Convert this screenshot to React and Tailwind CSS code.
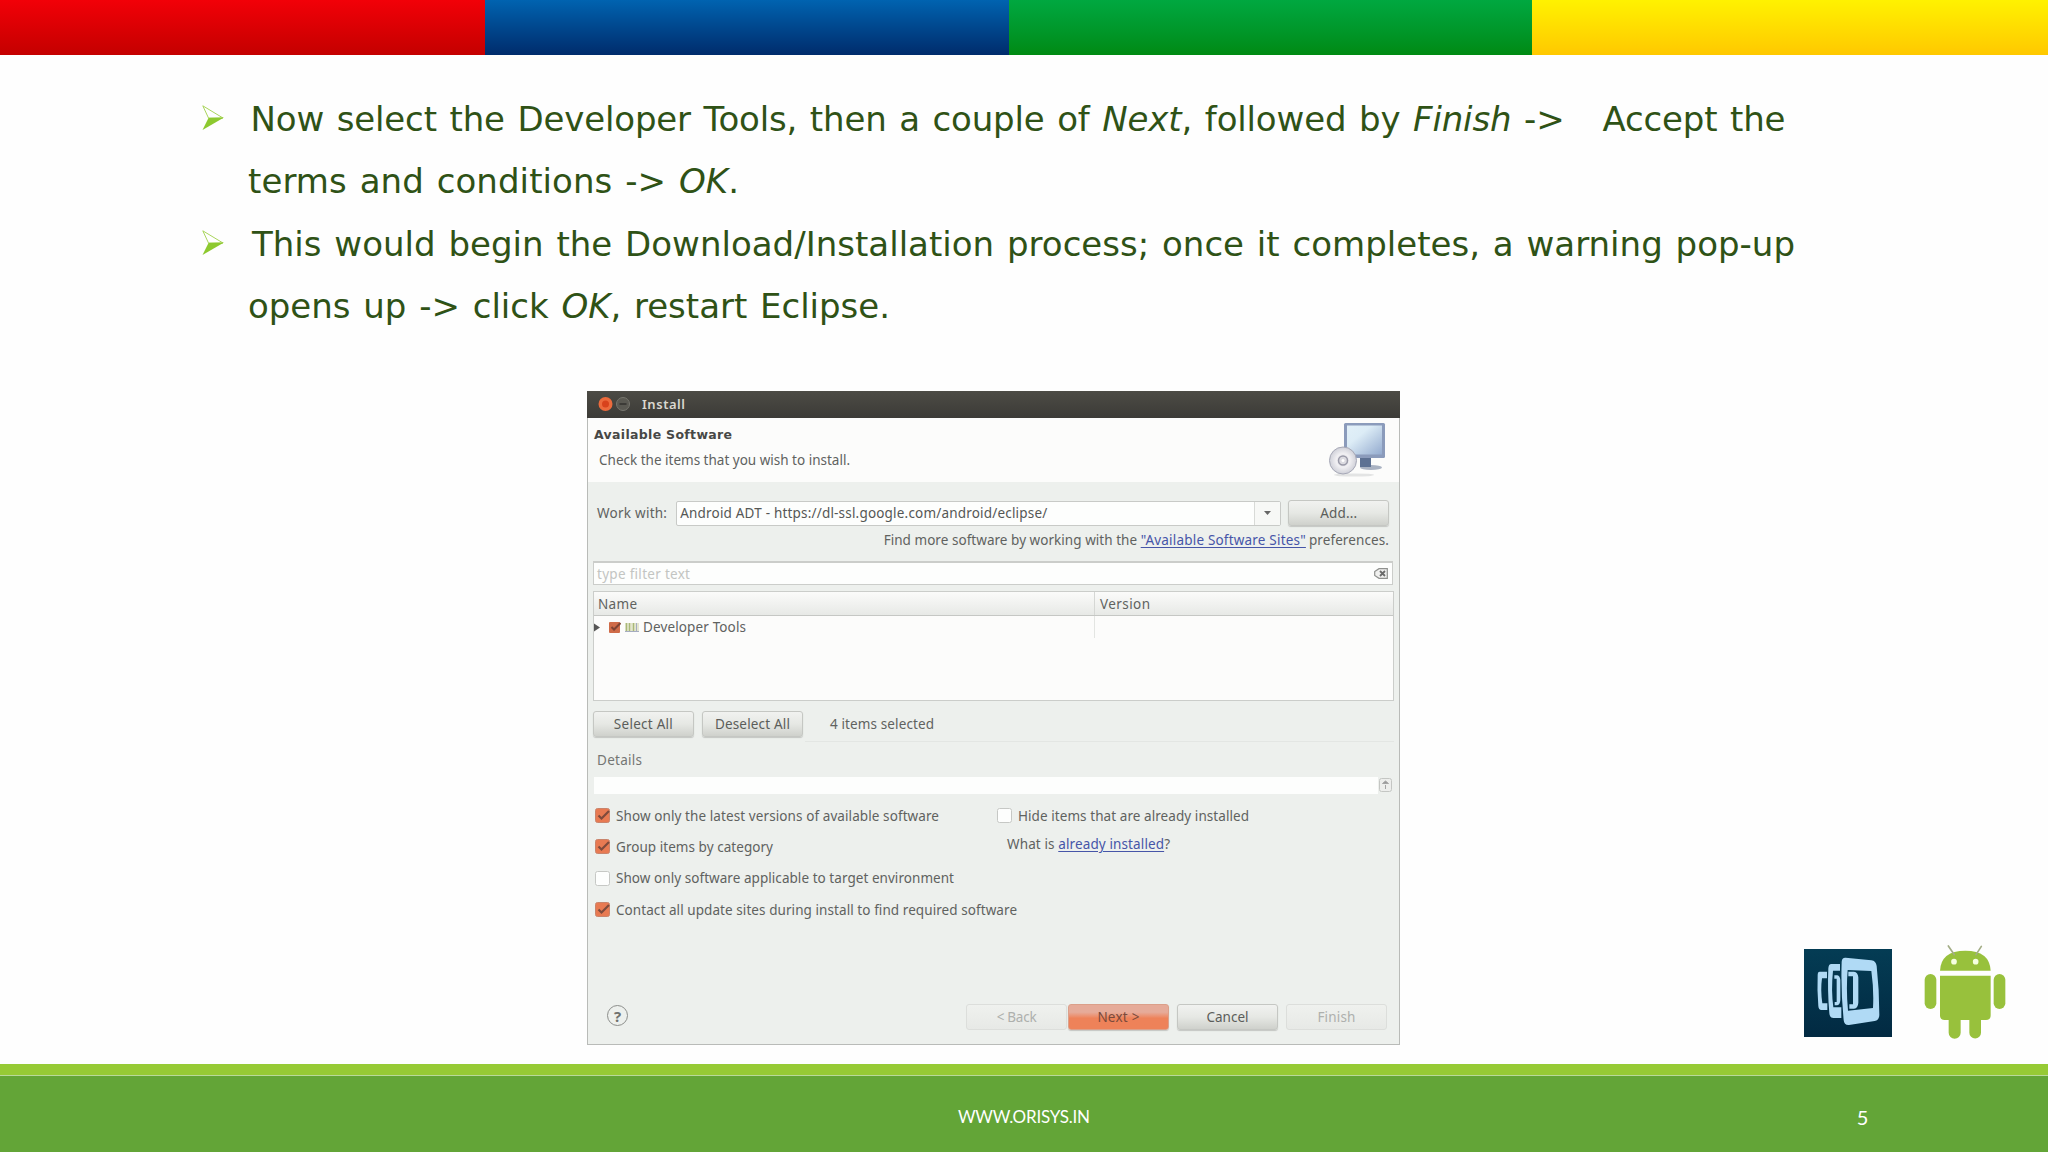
import { useLayoutEffect, useRef, useState } from 'react';

// Single line of text whose tracking is adjusted so that it fills `width`
function FitText({ width, className = '', children }) {
  const ref = useRef(null);
  const [spacing, setSpacing] = useState(0);

  useLayoutEffect(() => {
    const el = ref.current;
    const count = el.textContent.length;
    const natural = el.getBoundingClientRect().width - spacing * count;
    setSpacing((width - natural) / (count - 1));
  }, [width]);

  return (
    <span
      ref={ref}
      className={`inline-block shrink-0 whitespace-pre ${className}`}
      style={{ letterSpacing: `${spacing}px` }}
    >
      {children}
    </span>
  );
}

function Bullet() {
  return (
    <svg className="mt-[17px] h-[26px] w-[24px] shrink-0" viewBox="0 0 24 26">
      <path d="M0.8 0.8 L21 13 L6.500 13 Z" fill="#fff" stroke="#a9d45c" strokeWidth="1" />
      <path d="M6.500 13 L22 12.500 L0.500 25 Z" fill="#8dc92f" />
    </svg>
  );
}

function Checkbox({ checked }) {
  return (
    <svg className="h-[15px] w-[15px] shrink-0" viewBox="0 0 15 15">
      <rect
        x="0.5" y="0.5" width="14" height="14" rx="2"
        fill={checked ? '#e87a52' : '#fdfefd'}
        stroke={checked ? '#c9846c' : '#c6c8c5'}
      />
      {checked && <path d="M3.5 7.5 L6.5 10.5 L14 3" fill="none" stroke="#7e4a3c" strokeWidth="2.2" />}
    </svg>
  );
}

function Option({ checked, label, width }) {
  return (
    <div className="flex h-[31.3px] items-center gap-[6px]">
      <Checkbox checked={checked} />
      <FitText width={width}>{label}</FitText>
    </div>
  );
}

const buttonKinds = {
  normal: 'border-[#c5c7c3] bg-linear-to-b from-[#f1f2f0] via-[#e6e8e4] to-[#cfd1cc] text-[#5b5d5a] shadow-[0_1px_1px_#c4c6c3]',
  disabled: 'border-[#dcdedb] bg-linear-to-b from-[#eff1ee] to-[#e7e9e6] text-[#aeb0ad]',
  primary: 'border-[#dba08a] bg-linear-to-b from-[#e6ab99] from-30% to-[#ee8259] to-55% text-[#7a4a3b] shadow-[0_1px_1px_#c4c6c3]',
};

function Button({ kind = 'normal', width, children }) {
  return (
    <div className={`flex h-[26px] w-[101px] shrink-0 items-center justify-center rounded-[3px] border ${buttonKinds[kind]}`}>
      <FitText width={width}>{children}</FitText>
    </div>
  );
}

function ComputerIcon() {
  return (
    <svg className="h-[56px] w-[60px]" viewBox="0 0 60 56">
      <defs>
        <linearGradient id="screen" x1="0" y1="0" x2="1" y2="1">
          <stop offset="0" stopColor="#e2f0f8" />
          <stop offset="0.35" stopColor="#dcecf6" />
          <stop offset="1" stopColor="#94abcf" />
        </linearGradient>
        <radialGradient id="disc">
          <stop offset="0" stopColor="#c9c8d2" />
          <stop offset="0.5" stopColor="#f1f0f3" />
          <stop offset="1" stopColor="#cfd0d8" />
        </radialGradient>
      </defs>
      <ellipse cx="26" cy="53" rx="20" ry="1.6" fill="#e3e4e4" />
      <ellipse cx="43" cy="45.500" rx="11" ry="2.6" fill="#a9b2c2" />
      <rect x="32" y="36" width="11" height="9" fill="#5d7193" />
      <rect x="16" y="1" width="41" height="35" rx="1.5" fill="#8b9bbb" />
      <rect x="19" y="3.500" width="35" height="29" fill="url(#screen)" />
      <circle cx="15" cy="38.500" r="13.500" fill="url(#disc)" stroke="#a6a8b6" />
      <circle cx="15" cy="38.500" r="4.500" fill="#dcdbe1" stroke="#9a9aa8" strokeWidth="1.5" />
      <circle cx="15" cy="38.500" r="1.500" fill="#fff" />
    </svg>
  );
}

function InstallDialog() {
  return (
    <div className="flex h-[654px] w-[813px] flex-col border border-[#b9bbb8] bg-[#edf0ed] font-['Noto_Sans','Open_Sans',sans-serif] text-[13.5px] leading-[18px] text-[#60625f]">
      <div className="-mx-px -mt-px flex h-[27px] shrink-0 items-center bg-linear-to-b from-[#4c4b45] to-[#3c3b37] pb-px pl-[11px]">
        <svg className="h-[16px] w-[34px]" viewBox="0 0 34 16">
          <circle cx="7.500" cy="8" r="7" fill="#ec6a3c" />
          <circle cx="7.500" cy="8" r="3.500" fill="#d8421c" />
          <circle cx="25" cy="8" r="6.500" fill="#5a5952" stroke="#77766e" />
          <path d="M21.500 8 H28.500" stroke="#3c3b37" strokeWidth="2" />
        </svg>
        <FitText width={43} className="ml-[10px] text-[13px] font-semibold text-[#dad8d0]">Install</FitText>
      </div>

      <div className="flex h-[64px] shrink-0 justify-between bg-[#fcfcfb]">
        <div className="flex flex-col">
          <FitText width={138} className="mt-[8px] ml-[6px] self-start font-['DejaVu_Sans',sans-serif] text-[12.5px] font-bold text-[#474846]">
            Available Software
          </FitText>
          <FitText width={251} className="mt-[7px] ml-[11px] self-start">Check the items that you wish to install.</FitText>
        </div>
        <div className="mt-[4px] mr-[11px]">
          <ComputerIcon />
        </div>
      </div>

      <div className="mt-[18px] flex h-[26px] shrink-0 items-center pl-[9px]">
        <FitText width={70}>Work with:</FitText>
        <div className="ml-[9px] flex h-[25px] w-[605px] items-stretch rounded-[2px] border border-[#c8cac7] bg-[#fdfefd]">
          <div className="flex flex-1 items-center pl-[3px] text-[#555755]">
            <FitText width={367}>Android ADT - https://dl-ssl.google.com/android/eclipse/</FitText>
          </div>
          <div className="flex w-[26px] items-center justify-center border-l border-[#d8dad7] bg-[#f7f8f6]">
            <svg className="h-[4px] w-[7px]" viewBox="0 0 7 4"><path d="M0 0H7L3.500 4Z" fill="#666" /></svg>
          </div>
        </div>
        <div className="ml-[7px]">
          <Button width={37}>Add...</Button>
        </div>
      </div>

      <div className="mt-[5px] flex h-[18px] shrink-0 justify-end pr-[10px]">
        <FitText width={257}>Find more software by working with the </FitText>
        <FitText width={165} className="text-[#4655a8] underline underline-offset-2">"Available Software Sites"</FitText>
        <FitText width={80} className="ml-[3px]">preferences.</FitText>
      </div>

      <div className="mt-[12px] ml-[5px] flex h-[24px] w-[800px] shrink-0 items-center justify-between border border-t-2 border-[#cbcdca] bg-[#fdfefd] pr-[4px] pl-[3px]">
        <FitText width={93} className="text-[#c3c5c2]">type filter text</FitText>
        <svg className="h-[11px] w-[14px]" viewBox="0 0 14 11">
          <path d="M5 0.700 H13.300 V10.300 H5 L0.700 7.500 V3.500 Z" fill="#f0f1ef" stroke="#8f918e" strokeWidth="1.200" />
          <path d="M6 3 L11 8 M11 3 L6 8" stroke="#6b6b6b" strokeWidth="1.800" />
        </svg>
      </div>

      <div className="mt-[6px] ml-[5px] flex h-[110px] w-[801px] shrink-0 flex-col border border-[#cbcdca] bg-[#fcfcfb]">
        <div className="flex h-[24px] shrink-0 items-center border-b border-[#c5c7c4] bg-linear-to-b from-[#fbfbfa] to-[#e7e9e6]">
          <div className="flex h-full w-[501px] items-center border-r border-[#d5d7d4] pl-[4px]">
            <FitText width={39}>Name</FitText>
          </div>
          <FitText width={50} className="ml-[5px]">Version</FitText>
        </div>
        <div className="flex h-[22px] w-[501px] items-center border-r border-[#e3e5e2]">
          <svg className="h-[9px] w-[6px]" viewBox="0 0 6 9"><path d="M0 0.500 L6 4.500 L0 8.500Z" fill="#555" /></svg>
          <svg className="ml-[9px] h-[11px] w-[12px]" viewBox="0 0 12 11">
            <rect width="11" height="11" rx="1" fill="#cf6b48" />
            <path d="M2.500 5 L5 7.500 L11.500 1" fill="none" stroke="#7e4333" strokeWidth="2" />
          </svg>
          <svg className="ml-[4px] h-[9px] w-[14px]" viewBox="0 0 14 9">
            <rect width="14" height="9" fill="#e4e6ce" />
            <path d="M1.500 0V8 M4.500 0V8 M8.500 0V8" stroke="#a9b878" strokeWidth="1.400" />
            <path d="M11.500 0V8 M0 8.500H14" stroke="#a5acc0" />
          </svg>
          <FitText width={103} className="ml-[4px]">Developer Tools</FitText>
        </div>
      </div>

      <div className="mt-[10px] flex h-[26px] shrink-0 items-center pl-[5px]">
        <Button width={59}>Select All</Button>
        <div className="ml-[8px]">
          <Button width={75}>Deselect All</Button>
        </div>
        <FitText width={104} className="ml-[27px]">4 items selected</FitText>
      </div>

      <div className="mt-[4px] mr-[5px] ml-[217px] h-px shrink-0 bg-[#e3e6e3]" />
      <FitText width={45} className="mt-[9px] ml-[9px] self-start text-[#747673]">Details</FitText>

      <div className="mt-[7px] ml-[6px] flex h-[18px] shrink-0 items-center">
        <div className="h-[17px] w-[784px] bg-[#fdfefd]" />
        <svg className="ml-px h-[14px] w-[13px]" viewBox="0 0 13 14">
          <rect x="0.500" y="0.500" width="12" height="13" rx="2" fill="#edeeec" stroke="#c4c6c3" />
          <path d="M3.500 5.500 L6.500 3 L9.500 5.500Z M6.500 7V11" fill="#999" stroke="#a5a5a5" />
        </svg>
      </div>

      <div className="mt-[6px] flex shrink-0 pl-[7px]">
        <div className="w-[402px]">
          <Option checked width={323} label="Show only the latest versions of available software" />
          <Option checked width={157} label="Group items by category" />
          <Option width={338} label="Show only software applicable to target environment" />
          <Option checked width={401} label="Contact all update sites during install to find required software" />
        </div>
        <div>
          <Option width={231} label="Hide items that are already installed" />
          <FitText width={163} className="mt-[4px] ml-[10px]">
            What is <span className="text-[#4655a8] underline underline-offset-2">already installed</span>?
          </FitText>
        </div>
      </div>

      <div className="mt-auto mb-[14px] flex h-[26px] shrink-0 items-center pr-[12px] pl-[19px]">
        <div className="mb-[3px] flex h-[21px] w-[21px] items-center justify-center rounded-full border-[1.5px] border-[#8c8e8b] text-[15px] font-bold text-[#70726f]">?</div>
        <div className="ml-auto flex">
          <Button kind="disabled" width={40}>&lt; Back</Button>
          <div className="ml-px flex gap-[8px]">
            <Button kind="primary" width={42}>Next &gt;</Button>
            <Button width={42}>Cancel</Button>
            <Button kind="disabled" width={38}>Finish</Button>
          </div>
        </div>
      </div>
    </div>
  );
}

function PhoneGapLogo() {
  return (
    <svg className="h-[88px] w-[88px]" viewBox="70 87 264 264">
      <defs>
        <linearGradient id="pg" x1="0" y1="0" x2="0" y2="1">
          <stop offset="0" stopColor="#043c54" />
          <stop offset="1" stopColor="#022a42" />
        </linearGradient>
      </defs>
      <rect x="70" y="87" width="264" height="264" fill="url(#pg)" />
      <g fill="#b0daf5" fillRule="evenodd">
        <path d="M117 155 H139 V175 H124 Q119 210 125 250 H140 V270 H122 Q114 270 113 258 Q109 210 111 165 Q111 155 117 155Z" />
        <path d="M152 132 H178 V152 H157 Q151 210 158 262 H182 V294 H158 Q147 294 146 280 Q140 210 143 145 Q144 132 152 132Z" />
        <path d="M161 166 H170 Q178 168 179 180 V240 Q178 254 170 256 H162 V246 H168 V176 H161Z" />
        <path d="M195 113 L272 121 Q286 123 288 138 Q296 210 296 285 Q295 301 282 303 L205 315 Q190 316 189 300 Q180 210 183 125 Q184 112 195 113Z M201 150 Q196 210 202 272 L277 264 Q280 210 272 153Z" />
        <path d="M203 155 H220 Q232 157 233 172 V248 Q232 264 220 266 H206 V253 H217 V169 H203Z" />
      </g>
    </svg>
  );
}

function AndroidLogo() {
  return (
    <svg className="h-[95px] w-[82px]" viewBox="430 70 246 285">
      <g fill="#98c13c">
        <path d="M478 150 Q481 90 554 90 Q627 90 630 150Z" />
        <path d="M478 165 H630 V284 Q630 298 616 298 H601 V336 A17.500 17.500 0 0 1 566 336 V298 H540 V336 A18 18 0 0 1 504 336 V298 H492 Q478 298 478 284Z" />
        <rect x="432" y="160" width="35" height="105" rx="17.500" />
        <rect x="639" y="160" width="35" height="105" rx="17.500" />
      </g>
      <path d="M503 76 L521 102 M602 77 L586 102" stroke="#a3ad86" strokeWidth="5" strokeLinecap="round" />
      <circle cx="520" cy="123" r="8.500" fill="#f6ffe0" />
      <circle cx="585" cy="123" r="8.500" fill="#f6ffe0" />
    </svg>
  );
}

export default function App() {
  return (
    <div className="flex h-[1152px] w-[2048px] flex-col overflow-hidden bg-[#fefefe]">
      <div className="flex h-[54.5px] shrink-0">
        <div className="w-[485px] bg-linear-to-b from-[#f20008] to-[#c40000]" />
        <div className="w-[524px] bg-linear-to-b from-[#0063b0] to-[#002c6c]" />
        <div className="w-[523px] bg-linear-to-b from-[#00a840] to-[#008a12]" />
        <div className="flex-1 bg-linear-to-b from-[#fff200] to-[#ffc800]" />
      </div>

      <div className="h-[336.5px] shrink-0 pt-[33px] pl-[202px] font-['DejaVu_Sans',Verdana,sans-serif] text-[34px] leading-[62.5px] text-[#2f5216] [word-spacing:2px]">
        <div className="flex h-[125px]">
          <Bullet />
          <div className="flex flex-col items-start pl-[22px]">
            <FitText width={1535} className="ml-[2.5px]">
              Now select the Developer Tools, then a couple of <em>Next</em>, followed by <em>Finish</em> {'->   '}Accept the
            </FitText>
            <FitText width={491}>terms and conditions {'->'} <em>OK</em>.</FitText>
          </div>
        </div>
        <div className="flex h-[125px]">
          <Bullet />
          <div className="flex flex-col items-start pl-[22px]">
            <FitText width={1543} className="ml-[4px]">
              This would begin the Download/Installation process; once it completes, a warning pop-up
            </FitText>
            <FitText width={642}>opens up {'->'} click <em>OK</em>, restart Eclipse.</FitText>
          </div>
        </div>
      </div>

      <div className="flex h-[672.5px] shrink-0 pl-[587px]">
        <InstallDialog />
        <div className="flex flex-1 items-end pb-[24.5px] pl-[403.5px]">
          <div className="mb-[2px]">
            <PhoneGapLogo />
          </div>
          <div className="ml-[32px]">
            <AndroidLogo />
          </div>
        </div>
      </div>

      <div className="h-[11px] shrink-0 bg-[#96ca35]" />
      <div className="h-[1.5px] shrink-0 bg-[#b9d99a]" />
      <div className="flex flex-1 items-center bg-[#63a537] pt-[5px] font-['Lato',sans-serif] text-white">
        <FitText width={132} className="ml-[958px] text-[17px]">WWW.ORISYS.IN</FitText>
        <span className="ml-[767px] text-[20px]">5</span>
      </div>
    </div>
  );
}
